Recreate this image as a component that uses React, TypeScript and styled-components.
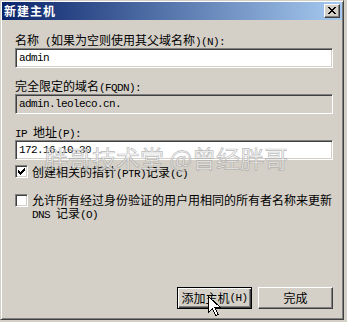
import React from "react";
import styled, { createGlobalStyle } from "styled-components";

const Global = createGlobalStyle`
  html, body { margin: 0; padding: 0; background: #d4d0c8; }
  #root { width: 347px; height: 322px; }
`;

const FONT = `"Noto Sans CJK SC", "Liberation Sans", sans-serif`;

const Window = styled.div`
  position: relative;
  width: 344px;
  height: 320px;
  box-sizing: border-box;
  border: 1px solid;
  border-color: #d4d0c8 #404040 #404040 #d4d0c8;
  box-shadow: inset 1px 1px #ffffff, inset -1px -1px #808080;
  padding: 1px;
  background: #d4d0c8;
  display: flex;
  flex-direction: column;
  font-family: ${FONT};
  font-size: 12px;
  color: #000;
`;

const TitleBar = styled.div`
  height: 18px;
  flex: none;
  background: linear-gradient(to right, #0a246a, #a6caf0);
  display: flex;
  align-items: center;
  justify-content: space-between;
  padding: 0 2px 0 2px;
`;

const Title = styled.span`
  color: #fff;
  font-weight: 700;
  font-size: 12px;
  letter-spacing: 1px;
  line-height: 18px;
`;

const CloseButton = styled.div`
  width: 16px;
  height: 14px;
  box-sizing: border-box;
  background: #d4d0c8;
  border: 1px solid;
  border-color: #ffffff #404040 #404040 #ffffff;
  box-shadow: inset -1px -1px #808080;
  display: flex;
  align-items: center;
  justify-content: center;
  padding: 0 1px 1px 0;
`;

const Body = styled.div`
  flex: 1;
  display: flex;
  flex-direction: column;
  padding: 13px 9px 9px 13px;
`;

const Group = styled.div<{ $first?: boolean }>`
  display: flex;
  flex-direction: column;
  margin-top: ${(p) => (p.$first ? 0 : 11)}px;
`;

const Label = styled.div`
  height: 14px;
  line-height: 14px;
  margin-bottom: 1px;
  white-space: pre;
`;

const Latin = styled.span`
  font-family: "Liberation Mono", monospace;
  font-size: 11px;
  letter-spacing: -0.6px;
  white-space: pre;
`;

const Field = styled.div<{ $disabled?: boolean }>`
  height: 20px;
  box-sizing: border-box;
  border: 1px solid;
  border-color: #808080 #ffffff #ffffff #808080;
  box-shadow: inset 1px 1px #404040, inset -1px -1px #d4d0c8;
  background: ${(p) => (p.$disabled ? "#d4d0c8" : "#ffffff")};
  padding: 0 3px;
  line-height: 18px;
  display: flex;
  align-items: center;
`;

const CheckRow = styled.div<{ $gap: number }>`
  display: flex;
  align-items: flex-start;
  gap: 4px;
  margin-top: ${(p) => p.$gap}px;
`;

const Box = styled.div<{ $offset: number }>`
  width: 13px;
  height: 13px;
  flex: none;
  box-sizing: border-box;
  border: 1px solid;
  border-color: #808080 #ffffff #ffffff #808080;
  box-shadow: inset 1px 1px #404040, inset -1px -1px #d4d0c8;
  background: #fff;
  margin-top: ${(p) => p.$offset}px;
  display: flex;
  align-items: center;
  justify-content: center;
`;

const CheckText = styled.div`
  line-height: 13px;
`;

const ButtonRow = styled.div`
  margin-top: auto;
  display: flex;
  justify-content: flex-end;
  gap: 6px;
`;

const Button = styled.div<{ $default?: boolean }>`
  width: 75px;
  height: 22px;
  box-sizing: border-box;
  background: #d4d0c8;
  border: 1px solid;
  border-color: ${(p) =>
    p.$default ? "#000 #000 #000 #000" : "#ffffff #404040 #404040 #ffffff"};
  box-shadow: ${(p) =>
    p.$default
      ? "inset 1px 1px #ffffff, inset -1px -1px #404040, inset -2px -2px #808080"
      : "inset -1px -1px #808080"};
  display: flex;
  align-items: center;
  justify-content: center;
  line-height: 14px;
  white-space: pre;
`;

const Watermark = styled.div`
  position: absolute;
  left: 43px;
  top: 142px;
  font-family: ${FONT};
  font-size: 24px;
  line-height: 30px;
  white-space: pre;
  color: rgba(245, 245, 245, 0.7);
  -webkit-text-stroke: 0.7px rgba(130, 130, 130, 0.55);
  pointer-events: none;
`;

const Cursor = styled.svg`
  position: absolute;
  left: 207px;
  top: 295px;
`;

const Mixed = ({ text }: { text: string }) => {
  const parts = text.match(/[\x00-\x7F]+|[^\x00-\x7F]+/g) || [];
  return (
    <>
      {parts.map((p, i) =>
        /^[\x00-\x7F]/.test(p) ? <Latin key={i}>{p}</Latin> : <span key={i}>{p}</span>
      )}
    </>
  );
};

const PixelGlyph = ({ rows }: { rows: string[] }) => (
  <svg width={rows[0].length} height={rows.length} shapeRendering="crispEdges">
    {rows.flatMap((r, y) =>
      r.split("").map((c, x) =>
        c === "X" ? <rect key={`${x}-${y}`} x={x} y={y} width={1} height={1} fill="#000" /> : null
      )
    )}
  </svg>
);

const closeX = [
  "XX....XX",
  ".XX..XX.",
  "..XXXX..",
  "...XX...",
  "..XXXX..",
  ".XX..XX.",
  "XX....XX",
];

const check = [
  "......X",
  ".....XX",
  "X...XXX",
  "XX.XXX.",
  "XXXXX..",
  ".XXX...",
  "..X....",
];

export default function App() {
  return (
    <>
      <Global />
      <Window>
        <TitleBar>
          <Title>新建主机</Title>
          <CloseButton>
            <PixelGlyph rows={closeX} />
          </CloseButton>
        </TitleBar>
        <Body>
          <Group $first>
            <Label>
              <Mixed text="名称 (如果为空则使用其父域名称)(N):" />
            </Label>
            <Field>
              <Latin>admin</Latin>
            </Field>
          </Group>
          <Group>
            <Label>
              <Mixed text="完全限定的域名(FQDN):" />
            </Label>
            <Field $disabled>
              <Latin>admin.leoleco.cn.</Latin>
            </Field>
          </Group>
          <Group>
            <Label>
              <Mixed text="IP 地址(P):" />
            </Label>
            <Field>
              <Latin>172.16.10.30</Latin>
            </Field>
          </Group>
          <CheckRow $gap={5}>
            <Box $offset={0}>
              <PixelGlyph rows={check} />
            </Box>
            <CheckText>
              <Mixed text="创建相关的指针(PTR)记录(C)" />
            </CheckText>
          </CheckRow>
          <CheckRow $gap={12}>
            <Box $offset={1} />
            <CheckText>
              允许所有经过身份验证的用户用相同的所有者名称来更新
              <br />
              <Mixed text="DNS 记录(O)" />
            </CheckText>
          </CheckRow>
          <ButtonRow>
            <Button $default>
              <Mixed text="添加主机(H)" />
            </Button>
            <Button>完成</Button>
          </ButtonRow>
        </Body>
        <Watermark>胖哥技术堂 @曾经胖哥</Watermark>
        <Cursor width="13" height="21" viewBox="0 0 13 21">
          <path
            d="M0.5 0.5 L0.5 16.5 L4.5 12.5 L7.5 19.5 L10 18.5 L7 11.5 L12.5 11.5 Z"
            fill="#fff"
            stroke="#000"
            strokeWidth="1"
            shapeRendering="crispEdges"
          />
        </Cursor>
      </Window>
    </>
  );
}
